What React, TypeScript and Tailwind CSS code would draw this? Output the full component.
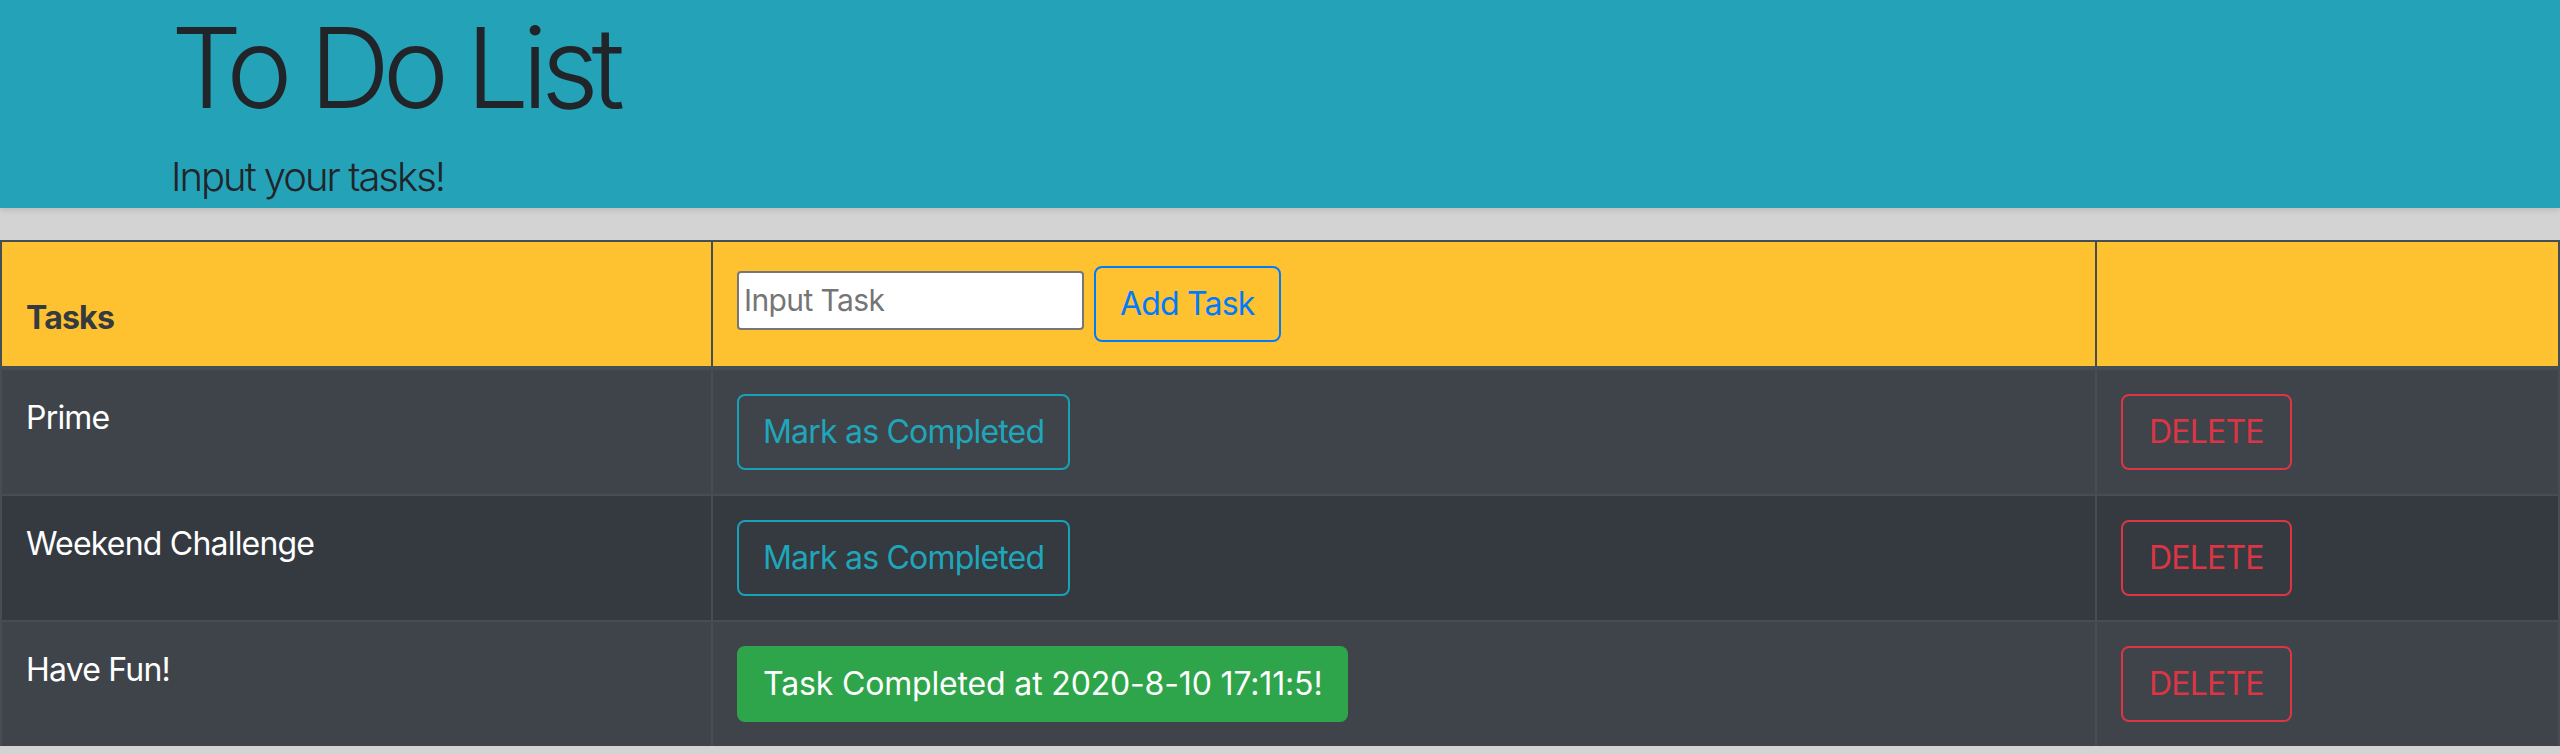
import React from "react";

const tasks = [
  { name: "Prime", done: null as string | null },
  { name: "Weekend Challenge", done: null as string | null },
  { name: "Have Fun!", done: "2020-8-10 17:11:5" },
];

export default function App() {
  return (
    <div className="min-h-screen bg-[#d3d3d3] font-['Inter',sans-serif] text-[#212529]">
      {/* Jumbotron */}
      <div className="bg-[#24a2b8] pl-[171px] h-[208px] shadow-[0_2px_6px_rgba(0,0,0,0.12)]">
        <h1 className="text-[112px] leading-[134px] font-light tracking-[-0.065em]">To Do List</h1>
        <p className="mt-[13px] text-[40px] leading-[60px] font-light tracking-[-0.05em]">Input your tasks!</p>
      </div>

      {/* Table */}
      <div className="mt-[32px] border-t-2 border-l-2 border-r-2 border-[#454d55] text-[32px] leading-[48px] tracking-[-0.025em]">
        {/* Header */}
        <div className="grid grid-cols-[711px_1384px_1fr] bg-[#fec12f] border-b-4 border-[#454d55]">
          <div className="flex items-end p-[24px] border-r-2 border-[#454d55]">
            <span className="font-bold text-[#343a40]">Tasks</span>
          </div>
          <div className="flex items-center p-[24px] border-r-2 border-[#454d55]">
            <input
              placeholder="Input Task"
              className="mb-2 w-[347px] h-[59px] bg-white border-2 border-[#767676] rounded-[4px] px-[5px] text-[30px] tracking-[-0.02em] placeholder:text-[#757575] outline-none"
            />
            <button className="ml-[10px] h-[76px] px-[24px] border-2 border-[#007bff] rounded-[8px] text-[#007bff]">
              Add Task
            </button>
          </div>
          <div className="p-[24px]" />
        </div>

        {/* Rows */}
        {tasks.map((t, i) => (
          <div
            key={t.name}
            className={`grid grid-cols-[711px_1384px_1fr] ${i % 2 === 0 ? "bg-[#3e444a]" : "bg-[#343a40]"} ${i > 0 ? "border-t-2 border-[#454d55]" : ""}`}
          >
            <div className="p-[24px] border-r-2 border-[#454d55]">
              <span className="text-white">{t.name}</span>
            </div>
            <div className="p-[24px] border-r-2 border-[#454d55] flex items-start">
              {t.done ? (
                <div className="h-[76px] px-[26px] flex items-center bg-[#2ea54a] rounded-[8px] text-white tracking-[-0.005em]">
                  Task Completed at {t.done}!
                </div>
              ) : (
                <button className="h-[76px] px-[24px] border-2 border-[#17a2b8] rounded-[8px] text-[#1fa6bb]">
                  Mark as Completed
                </button>
              )}
            </div>
            <div className="p-[24px] flex items-start">
              <button className="h-[76px] px-[26px] border-2 border-[#dc3545] rounded-[8px] text-[#dc3545]">
                DELETE
              </button>
            </div>
          </div>
        ))}
      </div>
    </div>
  );
}
